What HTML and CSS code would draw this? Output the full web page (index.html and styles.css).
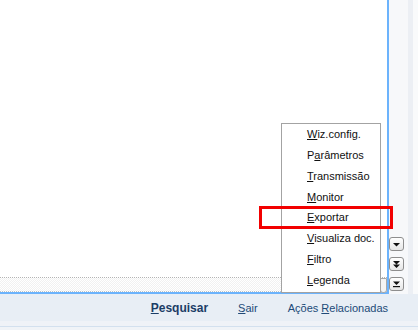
FILE: index.html
```html
<!DOCTYPE html>
<html>
  <head>
    <meta charset="UTF-8" />
    <title>Ações Relacionadas</title>
    <link rel="stylesheet" href="styles.css">
  </head>
  <body>
    <div class="screen">
      <div class="top">
        <div class="panel">
          <div class="canvas"></div>
          <div class="strip"><span class="strip-end"></span></div>
        </div>
        <div class="side">
          <button class="tool" title="Próximo">
            <svg width="9" height="7" viewBox="0 0 9 7"><path d="M1 2h7L4.5 5.5z" fill="#111"/></svg>
          </button>
          <button class="tool" title="Avançar">
            <svg width="9" height="9" viewBox="0 0 9 9"><path d="M1 1h7L4.5 4.5zM1 4.5h7L4.5 8z" fill="#111"/></svg>
          </button>
          <button class="tool" title="Último">
            <svg width="9" height="8" viewBox="0 0 9 8"><path d="M1 1.5h7L4.5 5z" fill="#111"/><rect x="1" y="6" width="7" height="1.2" fill="#111"/></svg>
          </button>
          <button class="tool"></button>
        </div>
      </div>

      <div class="bar">
        <a class="link strong"><u>P</u>esquisar</a>
        <a class="link"><u>S</u>air</a>
        <a class="link">Ações <u>R</u>elacionadas</a>
      </div>
      <div class="foot"></div>

      <ul class="menu">
        <li><u>W</u>iz.config.</li>
        <li>P<u>a</u>râmetros</li>
        <li><u>T</u>ransmissão</li>
        <li><u>M</u>onitor</li>
        <li><u>E</u>xportar</li>
        <li><u>V</u>isualiza doc.</li>
        <li><u>F</u>iltro</li>
        <li><u>L</u>egenda</li>
      </ul>
      <div class="highlight"></div>
    </div>
  </body>
</html>
```

FILE: styles.css
```css
html,
body {
  margin: 0;
  padding: 0;
}

body {
  width: 418px;
  height: 330px;
  overflow: hidden;
  background-color: #f0f3f7;
  font-family: "Liberation Sans", Arial, sans-serif;
  font-size: 11px;
}

.screen {
  position: relative;
  display: flex;
  flex-direction: column;
  height: 330px;
}

.top {
  display: flex;
  height: 294px;
}

.panel {
  display: flex;
  flex-direction: column;
  width: 387px;
  border-right: 2px solid #6cb3fc;
  border-bottom: 2px solid #6cb3fc;
  background-color: #fff;
}

.canvas {
  height: 277px;
  background-color: #fff;
}

.strip {
  position: relative;
  flex: 1;
  border-top: 1px dotted #b4b4b4;
  border-bottom: 1px dotted #c4c4c4;
  background-color: #fff;
  background-image: repeating-conic-gradient(#f1f1f1 0 25%, #fff 0 50%);
  background-size: 2px 2px;
}

.strip-end {
  position: absolute;
  right: 0;
  top: 0;
  width: 5px;
  height: 13px;
  border: 1px solid #a8a8a8;
  border-radius: 0 0 3px 3px;
  background-color: #f4f4f4;
}

.side {
  display: flex;
  flex-direction: column;
  align-items: flex-start;
  gap: 6px;
  flex: 1;
  padding-top: 237px;
  overflow: hidden;
  background: linear-gradient(to right, #f7f8fa 0 19px, #eceff4 19px 24px, #f9fafb 24px);
}

.tool {
  display: flex;
  align-items: center;
  justify-content: center;
  flex: none;
  width: 15px;
  height: 14px;
  padding: 0;
  border: 1px solid #8e8e8e;
  border-radius: 3px;
  background: linear-gradient(#ffffff, #e6e6e6);
}

.bar {
  display: flex;
  justify-content: flex-end;
  align-items: center;
  gap: 30px;
  height: 27px;
  padding-right: 30px;
  background-color: #e8eef5;
}

.link {
  color: #214a78;
  cursor: pointer;
}

.link.strong {
  font-size: 12px;
  font-weight: bold;
  color: #1b3d66;
}

.foot {
  height: 5px;
  border-bottom: 1px solid #d3e0ee;
  background-color: #eff2f7;
}

.menu {
  position: absolute;
  left: 281px;
  top: 123px;
  width: 98px;
  height: 168px;
  margin: 0;
  padding: 0;
  list-style: none;
  border: 1px solid #a3a3a3;
  background-color: #fff;
}

.menu li {
  height: 20.86px;
  line-height: 20.86px;
  padding-left: 25px;
  color: #111;
  white-space: nowrap;
}

.highlight {
  position: absolute;
  left: 259px;
  top: 206px;
  width: 128px;
  height: 17px;
  border: 3px solid #f20000;
}
```
